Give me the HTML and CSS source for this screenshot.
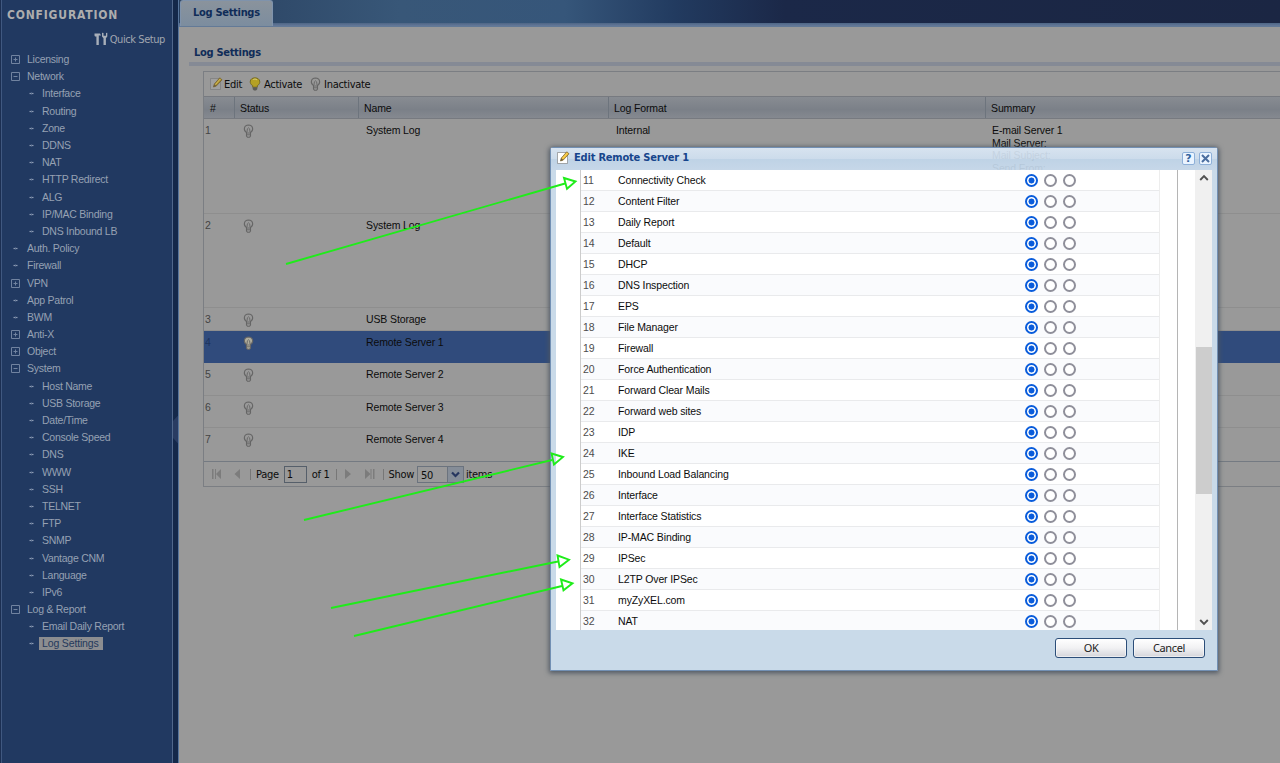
FILE: index.html
```html
<!DOCTYPE html>
<html lang="en">
<head>
<meta charset="utf-8">
<title>Log Settings</title>
<link rel="stylesheet" href="styles.css">
</head>
<body>
<svg class="defs" width="0" height="0">
  <symbol id="plus" viewBox="0 0 9 9"><path d="M.5.5h8v8h-8zM2.5 4.5h4M4.500 2.500v4" fill="none" stroke="#7183a0"/></symbol>
  <symbol id="minus" viewBox="0 0 9 9"><path d="M.5.5h8v8h-8zM2.500 4.500h4" fill="none" stroke="#7183a0"/></symbol>
  <symbol id="dash" viewBox="0 0 9 9"><path d="M2.500 4.500h4" stroke="#8d9bb2" stroke-width="1.200"/><path d="M4.500 3.500v2" stroke="#5e7394"/></symbol>
  <symbol id="bulb" viewBox="0 0 12 14"><path d="M3.500 8.500C.2 6.500.6 1.200 5.500 1c4.900.2 5.300 5.500 2 7.500v3.500L6.500 13.300h-2L3.500 12z" fill="var(--b,#999)" stroke="var(--s,#666)" stroke-width="1.100"/><path d="M4 8l.4-3.200 1.100-1 1.100 1L7 8M3.800 9h3.400M3.800 10.800h3.400" fill="none" stroke="var(--s,#666)" stroke-width=".9"/></symbol>
  <symbol id="bulbon" viewBox="0 0 12 14"><path d="M3.700 8.700C-.2 6.500.4 1 6 .8c5.600.2 6.200 5.700 2.300 7.900v1.500H3.700z" fill="#b5a124" stroke="#786c24"/><path d="M4.300 2.600C5.500 1.800 7 2 8 3" fill="none" stroke="#d8cf80"/><path d="M3.700 10.200h4.600v2L7 13.500H5l-1.300-1.300z" fill="#5c5c56"/></symbol>
  <symbol id="edit" viewBox="0 0 14 14"><path d="M1.500 1.500h8.500l1.500 1.500v9.500h-10z" fill="var(--p,#a0a0a0)" stroke="#777" stroke-opacity=".6"/><path d="M4.500 10l.8-3L10.800.8 13 2.800 7.300 9z" fill="var(--y,#a48a2b)" stroke="#6f5a2a" stroke-width=".7"/><path d="M4.500 10l.8-3L7.300 9z" fill="#6e6040"/><path d="M6.300 7.600L11.500 1.800" stroke="#ffe889" stroke-opacity=".6"/></symbol>
</svg>
<div class="app">
  <aside class="side">
    <h1>CONFIGURATION</h1>
    <div class="quick"><svg width="14" height="14" viewBox="0 0 14 14"><path d="M.5 1.500h5.500l1 2H4.800V13H2.400V4.500H1L.5 3.500zM8 .8v3.700l1.500 1.700V13h2.400V6.200L13.300 4.500V.8L12 1v2.700H9.500V1z" fill="#a8afb9"/></svg>Quick Setup</div>
    <ul class="nav">
      <li><svg><use href="#plus"/></svg><span>Licensing</span></li>
      <li><svg><use href="#minus"/></svg><span>Network</span></li>
      <li class="sub"><svg><use href="#dash"/></svg><span>Interface</span></li>
      <li class="sub"><svg><use href="#dash"/></svg><span>Routing</span></li>
      <li class="sub"><svg><use href="#dash"/></svg><span>Zone</span></li>
      <li class="sub"><svg><use href="#dash"/></svg><span>DDNS</span></li>
      <li class="sub"><svg><use href="#dash"/></svg><span>NAT</span></li>
      <li class="sub"><svg><use href="#dash"/></svg><span>HTTP Redirect</span></li>
      <li class="sub"><svg><use href="#dash"/></svg><span>ALG</span></li>
      <li class="sub"><svg><use href="#dash"/></svg><span>IP/MAC Binding</span></li>
      <li class="sub"><svg><use href="#dash"/></svg><span>DNS Inbound LB</span></li>
      <li><svg><use href="#dash"/></svg><span>Auth. Policy</span></li>
      <li><svg><use href="#dash"/></svg><span>Firewall</span></li>
      <li><svg><use href="#plus"/></svg><span>VPN</span></li>
      <li><svg><use href="#dash"/></svg><span>App Patrol</span></li>
      <li><svg><use href="#dash"/></svg><span>BWM</span></li>
      <li><svg><use href="#plus"/></svg><span>Anti-X</span></li>
      <li><svg><use href="#plus"/></svg><span>Object</span></li>
      <li><svg><use href="#minus"/></svg><span>System</span></li>
      <li class="sub"><svg><use href="#dash"/></svg><span>Host Name</span></li>
      <li class="sub"><svg><use href="#dash"/></svg><span>USB Storage</span></li>
      <li class="sub"><svg><use href="#dash"/></svg><span>Date/Time</span></li>
      <li class="sub"><svg><use href="#dash"/></svg><span>Console Speed</span></li>
      <li class="sub"><svg><use href="#dash"/></svg><span>DNS</span></li>
      <li class="sub"><svg><use href="#dash"/></svg><span>WWW</span></li>
      <li class="sub"><svg><use href="#dash"/></svg><span>SSH</span></li>
      <li class="sub"><svg><use href="#dash"/></svg><span>TELNET</span></li>
      <li class="sub"><svg><use href="#dash"/></svg><span>FTP</span></li>
      <li class="sub"><svg><use href="#dash"/></svg><span>SNMP</span></li>
      <li class="sub"><svg><use href="#dash"/></svg><span>Vantage CNM</span></li>
      <li class="sub"><svg><use href="#dash"/></svg><span>Language</span></li>
      <li class="sub"><svg><use href="#dash"/></svg><span>IPv6</span></li>
      <li><svg><use href="#minus"/></svg><span>Log &amp; Report</span></li>
      <li class="sub"><svg><use href="#dash"/></svg><span>Email Daily Report</span></li>
      <li class="sub on"><svg><use href="#dash"/></svg><span>Log Settings</span></li>
    </ul>
  </aside>
  <div class="split"><i></i></div>
  <main class="main">
    <div class="tabs"><div class="tab">Log Settings</div></div>
    <section class="panel">
      <h2>Log Settings</h2>
      <div class="grid">
        <div class="tools">
          <svg class="ed" width="14" height="14"><use href="#edit"/></svg><span>Edit</span>
          <svg class="lit" width="12" height="14"><use href="#bulbon"/></svg><span>Activate</span>
          <svg class="off" width="12" height="14"><use href="#bulb"/></svg><span>Inactivate</span>
        </div>
        <div class="row head"><b>#</b><b>Status</b><b>Name</b><b>Log Format</b><b>Summary</b></div>
        <div class="row tall"><b>1</b><b><svg><use href="#bulb"/></svg></b><b>System Log</b><b>Internal</b><b>E-mail Server 1<br>Mail Server:<br>Mail Subject:<br>Send From:</b></div>
        <div class="row tall"><b>2</b><b><svg><use href="#bulb"/></svg></b><b>System Log</b></div>
        <div class="row short"><b>3</b><b><svg><use href="#bulb"/></svg></b><b>USB Storage</b></div>
        <div class="row sel"><b>4</b><b><svg><use href="#bulb"/></svg></b><b>Remote Server 1</b></div>
        <div class="row"><b>5</b><b><svg><use href="#bulb"/></svg></b><b>Remote Server 2</b></div>
        <div class="row"><b>6</b><b><svg><use href="#bulb"/></svg></b><b>Remote Server 3</b></div>
        <div class="row last"><b>7</b><b><svg><use href="#bulb"/></svg></b><b>Remote Server 4</b></div>
        <div class="pager">
          <svg width="40" height="12" viewBox="0 0 40 12" fill="#7c7c7c"><path d="M4 1h1.500v10H4zM7 1h1v10H7zM13 1v10L8 6zM32 1v10L26.500 6z"/></svg>
          <i></i><span class="pg">Page</span><span class="num">1</span><span>of 1</span><i class="i2"></i>
          <svg width="40" height="12" viewBox="0 0 40 12" fill="#7c7c7c"><path d="M6 1v10L12 6zM26 1v10L31.500 6zM31.500 1h1v10h-1zM34 1h1.500v10H34z"/></svg>
          <i class="i3"></i><span class="show">Show</span><span class="combo">50<em><svg width="9" height="7" viewBox="0 0 9 7"><path d="M1 1.500l3.500 3.500L8 1.500" fill="none" stroke="#26365f" stroke-width="2.200"/></svg></em></span><span class="items">items</span>
        </div>
      </div>
    </section>
  </main>
</div>

<div class="dialog">
  <div class="title">
    <svg class="ted" width="14" height="14"><use href="#edit"/></svg><span>Edit Remote Server 1</span>
    <div class="tb q">?</div><div class="tb"><svg width="9" height="9" viewBox="0 0 9 9"><path d="M1 1l7 7M8 1L1 8" stroke="#4a6d9f" stroke-width="2"/></svg></div>
  </div>
  <div class="body">
    <div class="list">
      <div class="r"><i>11</i><span>Connectivity Check</span><u class="c"></u><u></u><u></u></div>
      <div class="r"><i>12</i><span>Content Filter</span><u class="c"></u><u></u><u></u></div>
      <div class="r"><i>13</i><span>Daily Report</span><u class="c"></u><u></u><u></u></div>
      <div class="r"><i>14</i><span>Default</span><u class="c"></u><u></u><u></u></div>
      <div class="r"><i>15</i><span>DHCP</span><u class="c"></u><u></u><u></u></div>
      <div class="r"><i>16</i><span>DNS Inspection</span><u class="c"></u><u></u><u></u></div>
      <div class="r"><i>17</i><span>EPS</span><u class="c"></u><u></u><u></u></div>
      <div class="r"><i>18</i><span>File Manager</span><u class="c"></u><u></u><u></u></div>
      <div class="r"><i>19</i><span>Firewall</span><u class="c"></u><u></u><u></u></div>
      <div class="r"><i>20</i><span>Force Authentication</span><u class="c"></u><u></u><u></u></div>
      <div class="r"><i>21</i><span>Forward Clear Mails</span><u class="c"></u><u></u><u></u></div>
      <div class="r"><i>22</i><span>Forward web sites</span><u class="c"></u><u></u><u></u></div>
      <div class="r"><i>23</i><span>IDP</span><u class="c"></u><u></u><u></u></div>
      <div class="r"><i>24</i><span>IKE</span><u class="c"></u><u></u><u></u></div>
      <div class="r"><i>25</i><span>Inbound Load Balancing</span><u class="c"></u><u></u><u></u></div>
      <div class="r"><i>26</i><span>Interface</span><u class="c"></u><u></u><u></u></div>
      <div class="r"><i>27</i><span>Interface Statistics</span><u class="c"></u><u></u><u></u></div>
      <div class="r"><i>28</i><span>IP-MAC Binding</span><u class="c"></u><u></u><u></u></div>
      <div class="r"><i>29</i><span>IPSec</span><u class="c"></u><u></u><u></u></div>
      <div class="r"><i>30</i><span>L2TP Over IPSec</span><u class="c"></u><u></u><u></u></div>
      <div class="r"><i>31</i><span>myZyXEL.com</span><u class="c"></u><u></u><u></u></div>
      <div class="r"><i>32</i><span>NAT</span><u class="c"></u><u></u><u></u></div>
    </div>
    <div class="edge"></div>
    <div class="scroll">
      <svg width="10" height="8" viewBox="0 0 10 8"><path d="M1.200 6L5 2.200 8.800 6" fill="none" stroke="#505050" stroke-width="1.900"/></svg>
      <div class="thumb"></div>
      <svg width="10" height="8" viewBox="0 0 10 8"><path d="M1.200 2L5 5.800 8.800 2" fill="none" stroke="#505050" stroke-width="1.900"/></svg>
    </div>
  </div>
  <div class="foot"><div class="btn">OK</div><div class="btn">Cancel</div></div>
</div>

<svg class="arrows" width="1280" height="763" viewBox="0 0 1280 763" fill="none" stroke="#1fec1a" stroke-width="1.900">
  <path d="M286 264L565 183.500M304 520L552 460M331 608L558 561.500M354 636L562 586"/>
  <path d="M564 178l11.500 3.500-8.500 7.300zM551.500 453.500l11.500 3.500-9 7.500zM557.500 555.500l11.500 4.200-9.500 7.300zM561 579.500l11.500 3.800-9 7z"/>
</svg>
</body>
</html>
```
FILE: styles.css
```css
* { box-sizing: border-box; }
body { margin: 0; height: 763px; overflow: hidden; background: #999; font: 10.5px "Liberation Sans", Arial, sans-serif; letter-spacing: -.12px; color: #0c0c0c; }
b, i, em { font-weight: normal; font-style: normal; }
u { text-decoration: none; }
svg { display: block; flex: none; }
.defs { position: absolute; }
.app { display: flex; width: 1280px; height: 763px; }

.side { width: 173px; flex: none; background: #213961; border-left: 1px solid #1c2f52; border-right: 1px solid #50678b; box-shadow: inset 1px 0 #405880; }
.side h1 { margin: 0; padding: 7px 0 0 6px; height: 31px; font: bold 12px/16px "DejaVu Sans", sans-serif; font-stretch: condensed; letter-spacing: .82px; color: #adadad; }
.quick { display: flex; align-items: center; justify-content: flex-end; gap: 2px; height: 16px; padding-right: 7px; font: 11px "DejaVu Sans", sans-serif; font-stretch: condensed; letter-spacing: -.42px; color: #a0a6af; }
.nav { list-style: none; margin: 4px 0 0; padding: 0; color: #96a1b3; letter-spacing: -.26px; }
.nav li { display: flex; align-items: center; height: 17.19px; padding-left: 10px; }
.nav li.sub { padding-left: 26px; }
.nav svg { width: 9px; height: 9px; }
.nav span { margin-left: 4px; padding: 0 3px; line-height: 13px; }
.nav li.sub span { margin-left: 3px; }
.nav .on span { background: #8c8d90; color: #24395c; letter-spacing: -.15px; padding-right: 4px; }

.split { width: 6px; flex: none; background: #14284a; border-right: 1px solid #56749b; display: flex; flex-direction: column; justify-content: center; padding-top: 96px; }
.split i { height: 28px; background: #293c62; clip-path: polygon(0 20%, 100% 0, 100% 100%, 0 80%); }

.main { flex: 1; min-width: 0; }
.tabs { display: flex; align-items: flex-end; height: 27px; padding: 0 0 0 1px; border-bottom: 1px solid #637a97; background: linear-gradient(#4e6685, #65799a) bottom / 100% 3px no-repeat, linear-gradient(90deg, #29405f, #385778 20%, #36567a 35%, #223b60 45%, #1b2848 55%, #1b2643); }
.tab { width: 93px; height: 26px; padding: 4px 0 0 12px; border: 1px solid #7f93ac; border-bottom: 0; border-radius: 3px 3px 0 0; background: linear-gradient(#8a939c, #7c8d9f); font: bold 11px/15px "DejaVu Sans", sans-serif; font-stretch: condensed; letter-spacing: -.3px; color: #102c58; }
.panel { padding: 17px 0 0 10px; }
.panel h2 { margin: 0 0 5px; padding: 2px 0 0 5px; height: 22px; border-bottom: 4px solid #858a95; font: bold 11px/14px "DejaVu Sans", sans-serif; font-stretch: condensed; letter-spacing: -.3px; color: #102c58; }
.grid { margin-left: 14px; border: 1px solid #7b7e83; border-right: 0; height: 416px; }
.tools { display: flex; align-items: center; height: 24px; padding-left: 5px; font: 11px "DejaVu Sans", sans-serif; font-stretch: condensed; letter-spacing: -.3px; }
.tools .ed { margin-right: 1px; }
.tools .lit { margin: 0 3px 0 7px; }
.tools .off { margin: 0 2px 0 8px; }
.row { display: grid; grid-template-columns: 31px 124px 250px 376px 1fr; height: 32.5px; border-bottom: 1px solid #8e8e8e; line-height: 12.5px; }
.row b { padding: 5px 0 0 7px; }
.row b:first-child { padding-left: 1px; color: #444; }
.row svg { width: 12px; height: 14px; margin-left: 1px; }
.row.head { grid-template-columns: 30px 124px 250px 377px 1fr; height: 23px; background: linear-gradient(#888c92, #7b8088 60%, #858990); border: 1px solid #777a80; border-width: 1px 0; }
.row.head b { border-left: 1px solid #6d747d; padding: 5px 0 0 5px; }
.row.head b:first-child { border: 0; padding-left: 6px; color: #111; }
.row.tall { height: 94.5px; }
.row.short { height: 23px; }
.row.sel { background: #304b7c; border-color: #304b7c; height: 32px; }
.row.sel svg { --b: #b0ad9c; }
.row.sel b:first-child { color: #1e335c; }
.row.last { border-bottom: 0; }
.pager { display: flex; align-items: center; height: 26px; border-top: 1px solid #747a82; padding-left: 4px; font: 11px "DejaVu Sans", sans-serif; font-stretch: condensed; letter-spacing: -.3px; }
.pager i { width: 1px; height: 11px; background: #777; margin: 0 5px 0 2px; }
.num { width: 23px; height: 17px; border: 1px solid #565f6a; padding: 1px 0 0 2px; margin: 0 5px; }
.pager .i2 { margin: 0 2px 0 6px; }
.pager .i3 { margin: 0 5px 0 4px; }
.combo { display: flex; justify-content: space-between; width: 47px; height: 17px; margin: 0 2px 0 3px; border: 1px solid #6b737e; padding-left: 3px; line-height: 17px; }
.combo em { width: 16px; display: flex; align-items: center; justify-content: center; background: #858d98; border-left: 1px solid #6b737e; }

.dialog { position: absolute; left: 550px; top: 147px; width: 668px; height: 524px; border: 1px solid #7290b4; border-radius: 3px 3px 0 0; box-shadow: 0 1px 5px 1px #4d5661; display: flex; flex-direction: column; }
.title { display: flex; align-items: center; height: 22px; padding: 0 5px 2px; background: linear-gradient(rgba(222,235,249,.9), rgba(210,227,244,.9) 48%, rgba(195,217,238,.9) 52%, rgba(203,222,241,.9)); }
.title > span { flex: 1; margin: -2px 0 0 4px; font: bold 11px/15px "DejaVu Sans", sans-serif; font-stretch: condensed; letter-spacing: -.2px; color: #17458c; }
.ted { --p: #fff; --y: #f1bd32; }
.tb { display: flex; align-items: center; justify-content: center; width: 13px; height: 13px; margin-left: 4px; background: #eaf4ff; border: 1px solid #8eb0d8; border-radius: 2px; font: bold 11px "DejaVu Sans", sans-serif; color: #34659f; }
.body { display: flex; height: 460px; background: #fff; border: 0 solid #c9dae9; border-width: 0 5px; overflow: hidden; }
.list { width: 580px; margin-left: 24px; border: 1px solid #ccc; border-width: 0 1px; border-right-color: #ededed; height: 463px; }
.r { display: flex; align-items: center; height: 21px; border-bottom: 1px solid #e9eaec; padding-left: 2px; }
.r:nth-child(even) { background: #fafbfd; }
.r i { width: 35px; color: #4c4c4c; }
.r span { width: 407px; }
.r u { width: 13px; height: 13px; margin-right: 6.2px; border: 2px solid #8f8f9a; border-radius: 50%; background: #fff; }
.r u.c { border-color: #0a5cdb; background: radial-gradient(circle, #0a5cdb 2.700px, #fff 3.300px); }
.edge { width: 18px; border-right: 1px solid #b5b5b5; }
.scroll { width: 17px; margin-left: auto; background: #f0f0f0; display: flex; flex-direction: column; align-items: center; justify-content: space-between; padding: 4px 0; }
.thumb { width: 16px; height: 147px; margin-top: 40px; background: #cdcdcd; }
.foot { flex: 1; display: flex; justify-content: flex-end; gap: 6px; padding: 8px 12px 0 0; background: #c9dae9; }
.btn { width: 72px; height: 20px; border: 1px solid #2c4e79; border-radius: 3px; background: linear-gradient(#fff, #f1f1f3 50%, #d5d5da); box-shadow: inset 0 0 0 1px #fff8; text-align: center; font: 11px/18px "Noto Sans", sans-serif; color: #222; letter-spacing: -.35px; }
.arrows { position: absolute; left: 0; top: 0; }
```
